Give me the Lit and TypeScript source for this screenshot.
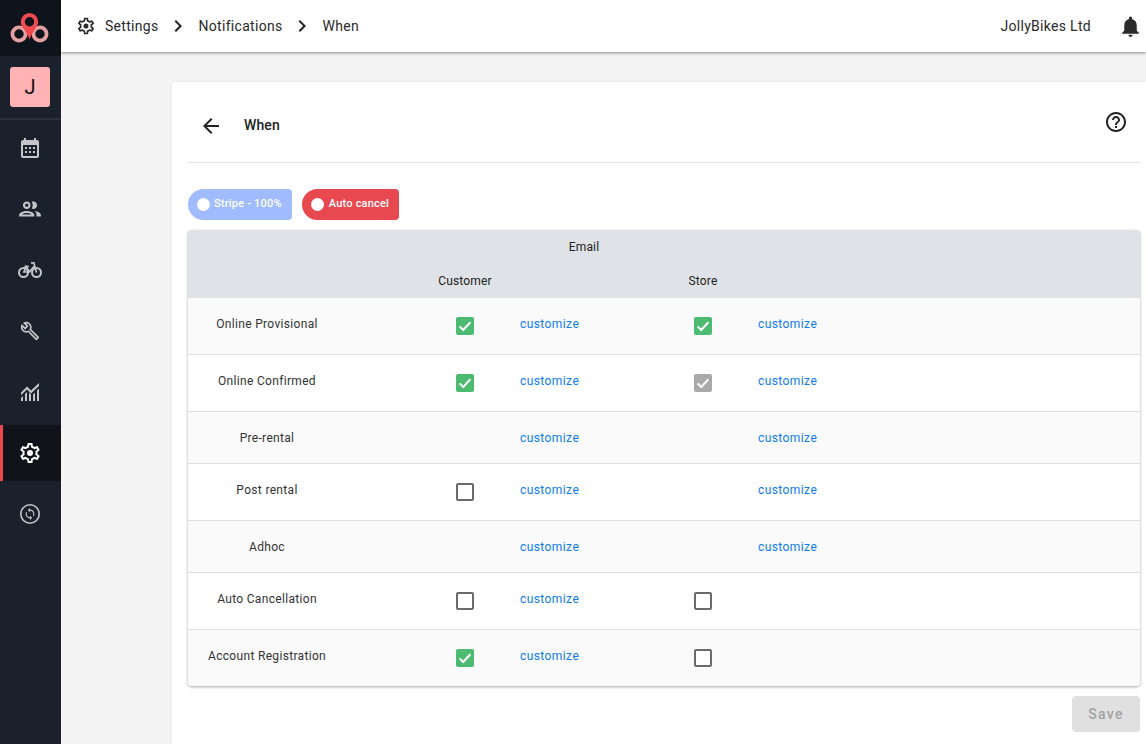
import { LitElement, html, css, svg } from "lit";
import { customElement } from "lit/decorators.js";

const gear = "M19.43 12.98c.04-.32.07-.64.07-.98 0-.34-.03-.66-.07-.98l2.11-1.65c.19-.15.24-.42.12-.64l-2-3.46c-.09-.16-.26-.25-.44-.25-.06 0-.12.01-.17.03l-2.49 1c-.52-.4-1.08-.73-1.69-.98l-.38-2.65C14.46 2.18 14.25 2 14 2h-4c-.25 0-.46.18-.49.42l-.38 2.65c-.61.25-1.17.59-1.69.98l-2.49-1c-.06-.02-.12-.03-.18-.03-.17 0-.34.09-.43.25l-2 3.46c-.13.22-.07.49.12.64l2.11 1.65c-.04.32-.07.65-.07.98 0 .33.03.66.07.98l-2.11 1.65c-.19.15-.24.42-.12.64l2 3.46c.09.16.26.25.44.25.06 0 .12-.01.17-.03l2.49-1c.52.4 1.08.73 1.69.98l.38 2.65c.03.24.24.42.49.42h4c.25 0 .46-.18.49-.42l.38-2.65c.61-.25 1.17-.59 1.69-.98l2.49 1c.06.02.12.03.18.03.17 0 .34-.09.43-.25l2-3.46c.12-.22.07-.49-.12-.64l-2.11-1.65zm-1.98-1.71c.04.31.05.52.05.73 0 .21-.02.43-.05.73l-.14 1.13.89.7 1.08.84-.7 1.21-1.27-.51-1.04-.42-.9.68c-.43.32-.84.56-1.25.73l-1.06.43-.16 1.13-.2 1.35h-1.4l-.19-1.35-.16-1.13-1.06-.43c-.43-.18-.83-.41-1.23-.71l-.91-.7-1.06.43-1.27.51-.7-1.21 1.08-.84.89-.7-.14-1.13c-.03-.31-.05-.54-.05-.74s.02-.43.05-.73l.14-1.13-.89-.7-1.08-.84.7-1.21 1.27.51 1.04.42.9-.68c.43-.32.84-.56 1.25-.73l1.06-.43.16-1.13.2-1.35h1.39l.19 1.35.16 1.13 1.06.43c.43.18.83.41 1.23.71l.91.7 1.06-.43 1.27-.51.7 1.21-1.07.85-.89.7.14 1.13zM12 9a3 3 0 1 0 0 6 3 3 0 0 0 0-6z";

const icon = (inner: unknown, size = 24) => html`<svg width=${size} height=${size} viewBox="0 0 24 24" fill="currentColor">${inner}</svg>`;

const chevron = svg`<path d="M10 6L8.590 7.410 13.170 12l-4.580 4.590L10 18l6-6z"/>`;

const nav: { p: unknown; s: number }[] = [
  { s: 24, p: svg`<path d="M19 4h-1V2h-2v2H8V2H6v2H5a2 2 0 0 0-2 2v14a2 2 0 0 0 2 2h14a2 2 0 0 0 2-2V6a2 2 0 0 0-2-2zm0 16H5V9h14v11z"/><path d="M7 11h2v2H7zM11 11h2v2h-2zM15 11h2v2h-2zM7 15h2v2H7zM11 15h2v2h-2zM15 15h2v2h-2z"/>` },
  { s: 26, p: svg`<path d="M9 13.750c-2.340 0-7 1.170-7 3.500V19h14v-1.750c0-2.330-4.660-3.500-7-3.500zM4.340 17c.84-.58 2.870-1.250 4.660-1.250s3.820.67 4.660 1.250H4.340zM9 12c1.930 0 3.500-1.570 3.500-3.500S10.930 5 9 5 5.500 6.570 5.500 8.500 7.070 12 9 12zm0-5c.83 0 1.500.67 1.500 1.500S9.830 10 9 10s-1.500-.67-1.500-1.500S8.170 7 9 7zm7.040 6.810c1.160.84 1.960 1.960 1.960 3.440V19h4v-1.750c0-2.020-3.500-3.170-5.960-3.440zM15 12c1.930 0 3.500-1.570 3.500-3.500S16.930 5 15 5c-.54 0-1.040.13-1.500.35.63.89 1 1.980 1 3.150s-.37 2.260-1 3.150c.46.22.96.35 1.500.35z"/>` },
  { s: 24, p: svg`<g fill="none" stroke="currentColor"><circle cx="5.500" cy="14.500" r="4.500" stroke-width="2"/><circle cx="18.500" cy="14.500" r="4.500" stroke-width="2"/><path d="M13 4.800h2.800l2.700 9.700M15.800 8.500l-4.300 5.500H6l2-5.500 3.500 5.500M6.500 8.500h4.500" stroke-width="1.700"/></g>` },
  { s: 20, p: svg`<path d="M22.610 18.990l-9.080-9.080c.93-2.340.45-5.100-1.440-7C9.790.61 6.210.4 3.660 2.260L7.500 6.110 6.080 7.520 2.250 3.690C.39 6.230.6 9.820 2.900 12.110c1.860 1.860 4.570 2.350 6.890 1.480l9.110 9.110c.39.39 1.020.39 1.410 0l2.300-2.300c.4-.38.4-1.010 0-1.410zm-3 1.600l-9.460-9.460c-.61.45-1.290.72-2 .82-1.360.2-2.790-.21-3.830-1.250C3.370 9.760 2.930 8.500 3 7.260l3.090 3.090 4.240-4.240-3.090-3.090c1.240-.07 2.490.37 3.440 1.310 1.080 1.080 1.490 2.570 1.240 3.960-.12.71-.42 1.370-.88 1.960l9.450 9.450-.88.89z"/>` },
  { s: 24, p: svg`<g transform="translate(1 0)"><path d="M2 21v-3l2-2v5H2zm4 0v-7l2-2v9H6zm4 0v-8.500l2 2V21h-2zm4 0v-6.500l2-2V21h-2zm4 0V10.500l2-2V21h-2z"/><path d="M2 15.200V12.500L8 6.500l4 4L20 3v3l-8 7.500-4-4z"/></g>` },
];
const syncCircle = svg`<circle cx="12" cy="12" r="9.200" fill="none" stroke="currentColor" stroke-width="1.600"/><path transform="translate(5.400 5.400) scale(.55)" d="M12 4V1L8 5l4 4V6c3.310 0 6 2.690 6 6 0 1.010-.25 1.970-.7 2.800l1.460 1.460C19.540 15.030 20 13.570 20 12c0-4.420-3.580-8-8-8zm0 14c-3.310 0-6-2.690-6-6 0-1.010.25-1.970.7-2.800L5.240 7.740C4.460 8.970 4 10.430 4 12c0 4.420 3.580 8 8 8v3l4-4-4-4v3z"/>`;

const checkSvg = html`<svg viewBox="0 0 18 18" width="18" height="18"><path d="M3.600 9.400 7.200 13 14.400 5.200" fill="none" stroke="#fff" stroke-width="2"/></svg>`;

type Row = { name: string; a: string; b: string; lb: boolean; h: string };
const rows: Row[] = [
  { name: "Online Provisional", a: "on", b: "on", lb: true, h: "tall" },
  { name: "Online Confirmed", a: "on", b: "dis", lb: true, h: "tall" },
  { name: "Pre-rental", a: "", b: "", lb: true, h: "short" },
  { name: "Post rental", a: "off", b: "", lb: true, h: "tall" },
  { name: "Adhoc", a: "", b: "", lb: true, h: "short" },
  { name: "Auto Cancellation", a: "off", b: "off", lb: false, h: "tall" },
  { name: "Account Registration", a: "on", b: "off", lb: false, h: "last" },
];

@customElement("app-root")
export class AppRoot extends LitElement {
  static styles = css`
    :host { display: block; width: 1146px; height: 744px; overflow: hidden; font-family: Roboto, sans-serif; color: #222; background: #f4f4f4; }
    * { box-sizing: border-box; }
    .app { display: flex; height: 744px; }
    .side { width: 61px; flex: none; background: #1a202c; display: flex; flex-direction: column; }
    .logo { height: 56px; background: #0f131b; display: flex; align-items: center; justify-content: center; padding-right: 1px; }
    .org { height: 64px; border-bottom: 2px solid #2b303c; display: flex; justify-content: center; padding: 11px 1px 0 0; }
    .avatar { width: 40px; height: 40px; border-radius: 3px; background: #ffb3b5; color: #111; font-size: 20px; display: flex; align-items: center; justify-content: center; }
    .nav { display: flex; flex-direction: column; }
    .nav-item { height: 56px; display: flex; align-items: center; justify-content: center; color: #c4c6ca; border-left: 3px solid transparent; padding-right: 4px; margin-bottom: 5px; }
    .nav-item.active { background: #10131a; color: #fff; border-left-color: #eb474f; }
    .main { flex: 1; min-width: 0; display: flex; flex-direction: column; }
    .top { height: 52px; background: #fff; box-shadow: 0 1px 3px rgba(0,0,0,.45); display: flex; align-items: center; padding: 0 3px 0 15px; font-size: 14px; letter-spacing: .3px; color: #2a2a2a; position: relative; }
    .crumbs { display: flex; align-items: center; }
    .crumbs .g { margin-right: 9px; display: flex; }
    .sep { display: flex; margin: 0 9px 0 7px; color: #222; }
    .right { margin-left: auto; display: flex; align-items: center; gap: 27px; }
    .content { flex: 1; padding: 30px 0 0 111px; min-height: 0; }
    .card { background: #fff; height: 700px; border-radius: 4px 0 0 0; padding: 0 6px 0 16px; box-shadow: 0 0 3px rgba(0,0,0,.08); }
    .head { height: 81px; border-bottom: 1px solid #e2e2e2; display: flex; align-items: center; padding: 8px 0 0 11px; }
    .head .title { font-size: 14px; font-weight: 500; color: #222; margin: 0 0 2px 21px; letter-spacing: .1px; }
    .head .help { margin: 0 0 0 auto; display: flex; position: relative; top: -4px; right: 12px; }
    .pills { display: flex; gap: 10px; padding-top: 26px; }
    .pill { height: 31px; display: flex; align-items: center; gap: 4px; padding: 0 10px 2px 9px; border-radius: 15.5px 4px 4px 15.5px; color: #fff; font-size: 11px; font-weight: 500; letter-spacing: .2px; }
    .pill i { width: 13px; height: 13px; border-radius: 50%; background: #fff; display: block; margin-top: 2px; }
    .pill.blue { background: #a0bbfe; }
    .pill.red { background: #e8484f; gap: 5px; }
    .table { margin-top: 10px; border-radius: 4px; box-shadow: 0 1px 3px rgba(0,0,0,.35); font-size: 12px; letter-spacing: .15px; color: #222; overflow: hidden; }
    .thead { background: #dfe2e7; height: 68px; }
    .email { height: 34px; width: 792px; display: flex; align-items: center; justify-content: center; }
    .row { display: grid; grid-template-columns: 238px 78px 160px 78px 1fr; }
    .hrow { height: 34px; align-items: center; }
    .tr { padding-top: 19px; border-bottom: 1px solid #e0e0e0; background: #fff; align-items: start; line-height: 15px; color: #333; }
    .tr.tall { height: 57px; }
    .tr.short { height: 52px; }
    .tr.last { height: 56px; border-bottom: none; }
    .tr.odd { background: #fafafa; }
    .name { width: 158px; text-align: center; letter-spacing: .32px; }
    .c { text-align: center; }
    .hrow .c2 { grid-column: 2; }
    .hrow .c4 { grid-column: 4; }
    a { color: #0d7cf2; text-decoration: none; padding-left: 16px; letter-spacing: .42px; }
    .cb { width: 18px; height: 18px; margin: 0 auto; border-radius: 2px; display: block; }
    .cb.on { background: #4cbb71; }
    .cb.dis { background: #a9a9a9; }
    .cb.off { border: 2px solid #6b6b6b; background: #fff; }
    .foot { display: flex; justify-content: flex-end; padding-top: 10px; }
    .save { width: 68px; height: 36px; background: #e0e0e0; color: #a3a3a3; border: none; border-radius: 4px; font: 500 14px Roboto, sans-serif; letter-spacing: 1.25px; display: flex; align-items: center; justify-content: center; }
  `;

  private cb(v: string) {
    if (!v) return html`<span></span>`;
    return html`<span class="cb ${v}">${v !== "off" ? checkSvg : ""}</span>`;
  }

  render() {
    return html`<div class="app">
      <aside class="side">
        <div class="logo">
          <svg width="40" height="32" viewBox="0 0 40 32">
            <circle cx="9" cy="22" r="6.600" fill="none" stroke="#e5a0a2" stroke-width="3.800"/>
            <circle cx="30" cy="22" r="6.600" fill="none" stroke="#e5a0a2" stroke-width="3.800"/>
            <path fill-rule="evenodd" d="M19.500 1a8.700 8.700 0 0 0-8.700 8.700c0 5.500 6.200 9.500 8.700 17.800 2.500-8.300 8.700-12.300 8.700-17.800A8.700 8.700 0 0 0 19.500 1zm0 4a4.700 4.700 0 1 1 0 9.400 4.700 4.700 0 0 1 0-9.400z" fill="#ef4a50"/>
          </svg>
        </div>
        <div class="org"><div class="avatar">J</div></div>
        <nav class="nav">
          ${nav.map((n) => html`<div class="nav-item">${icon(n.p, n.s)}</div>`)}
          <div class="nav-item active">${icon(svg`<path d=${gear} fill-rule="evenodd"/>`, 24)}</div>
          <div class="nav-item">${icon(syncCircle, 24)}</div>
        </nav>
      </aside>
      <div class="main">
        <header class="top">
          <div class="crumbs">
            <span class="g">${icon(svg`<path d=${gear}/>`, 20)}</span>
            <span>Settings</span>
            <span class="sep">${icon(chevron, 24)}</span>
            <span>Notifications</span>
            <span class="sep">${icon(chevron, 24)}</span>
            <span>When</span>
          </div>
          <div class="right">
            <span>JollyBikes Ltd</span>
            ${icon(svg`<path d="M12 22c1.100 0 2-.9 2-2h-4c0 1.100.9 2 2 2zm6-6v-5c0-3.100-1.600-5.600-4.500-6.300V4c0-.8-.7-1.500-1.500-1.500s-1.500.7-1.500 1.500v.7C7.600 5.400 6 7.900 6 11v5l-2 2v1h16v-1l-2-2z"/>`, 25)}
          </div>
        </header>
        <div class="content">
          <section class="card">
            <div class="head">
              ${icon(svg`<path d="M20 11H7.830l5.590-5.590L12 4l-8 8 8 8 1.410-1.410L7.830 13H20v-2z"/>`, 24)}
              <span class="title">When</span>
              <span class="help">${icon(svg`<path d="M11 18h2v-2h-2v2zm1-16C6.480 2 2 6.480 2 12s4.480 10 10 10 10-4.480 10-10S17.520 2 12 2zm0 18c-4.410 0-8-3.590-8-8s3.590-8 8-8 8 3.590 8 8-3.590 8-8 8zm0-14c-2.210 0-4 1.790-4 4h2c0-1.100.9-2 2-2s2 .9 2 2c0 2-3 1.750-3 5h2c0-2.250 3-2.500 3-5 0-2.210-1.790-4-4-4z"/>`, 24)}</span>
            </div>
            <div class="pills">
              <div class="pill blue"><i></i>Stripe - 100%</div>
              <div class="pill red"><i></i>Auto cancel</div>
            </div>
            <div class="table">
              <div class="thead">
                <div class="email">Email</div>
                <div class="row hrow"><span class="c c2">Customer</span><span class="c c4">Store</span></div>
              </div>
              ${rows.map((r, i) => html`<div class="row tr ${r.h} ${i % 2 === 0 ? "odd" : ""}">
                <span class="name">${r.name}</span>
                ${this.cb(r.a)}
                <a href="#">customize</a>
                ${this.cb(r.b)}
                ${r.lb ? html`<a href="#">customize</a>` : html`<span></span>`}
              </div>`)}
            </div>
            <div class="foot"><button class="save">Save</button></div>
          </section>
        </div>
      </div>
    </div>`;
  }
}
